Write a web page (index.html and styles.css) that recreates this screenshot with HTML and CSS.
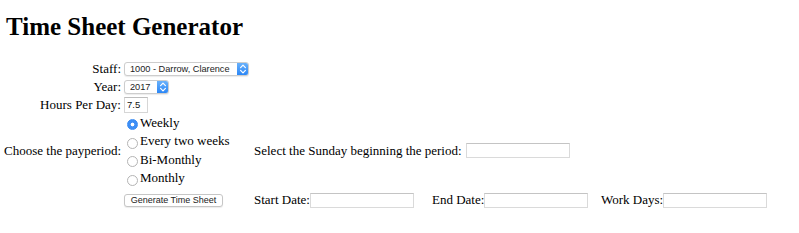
FILE: index.html
```html
<!DOCTYPE html>
<html lang="en">
<head>
    <meta charset="UTF-8">
    <title>Time Sheet Generator</title>
    <link rel="stylesheet" href="styles.css">
</head>
<body>
    <h1 class="title">Time Sheet Generator</h1>

    <form class="sheet-form">
        <!-- staff / year / hours -->
        <label class="field-label row-1" for="staff">Staff:</label>
        <div class="field row-1">
            <span class="select-box staff-box">
                <select id="staff"><option>1000 - Darrow, Clarence</option></select>
                <span class="select-arrow">
                    <svg width="12" height="14" viewBox="0 0 12 14"><path d="M3.6 5.6 6 3.2 8.4 5.6M3.6 8.4 6 10.8 8.4 8.4" fill="none" stroke="#fff" stroke-width="1.2" stroke-linecap="round" stroke-linejoin="round"/></svg>
                </span>
            </span>
        </div>

        <label class="field-label row-2" for="year">Year:</label>
        <div class="field row-2">
            <span class="select-box year-box">
                <select id="year"><option>2017</option></select>
                <span class="select-arrow">
                    <svg width="12" height="14" viewBox="0 0 12 14"><path d="M3.6 5.6 6 3.2 8.4 5.6M3.6 8.4 6 10.8 8.4 8.4" fill="none" stroke="#fff" stroke-width="1.2" stroke-linecap="round" stroke-linejoin="round"/></svg>
                </span>
            </span>
        </div>

        <label class="field-label row-3" for="hours">Hours Per Day:</label>
        <div class="field row-3">
            <input type="text" id="hours" class="hours-input" value="7.5">
        </div>

        <!-- pay period -->
        <div class="field-label row-4">Choose the payperiod:</div>
        <div class="radio-list row-4">
            <label class="radio-row"><input type="radio" name="period" checked>Weekly</label>
            <label class="radio-row"><input type="radio" name="period">Every two weeks</label>
            <label class="radio-row"><input type="radio" name="period">Bi-Monthly</label>
            <label class="radio-row"><input type="radio" name="period">Monthly</label>
        </div>
        <div class="sunday-cell row-4">
            <span>Select the Sunday beginning the period:</span><input type="text" class="date-input">
        </div>

        <!-- generate -->
        <div class="field row-5">
            <button type="button" class="gen-btn">Generate Time Sheet</button>
        </div>
        <div class="date-cell row-5 col-3">Start Date:<input type="text" class="date-input"></div>
        <div class="date-cell row-5 col-4">End Date:<input type="text" class="date-input"></div>
        <div class="date-cell row-5 col-5">Work Days:<input type="text" class="date-input"></div>
    </form>
</body>
</html>
```

FILE: styles.css
```css
body {
    margin: 0;
    padding: 12px 6px 0;
    font-family: "Liberation Serif", "Times New Roman", serif;
    font-size: 13px;
    color: #000;
    background-color: #fff;
}
.title {
    margin: 0;
    font-size: 25px;
    line-height: 29px;
    font-weight: bold;
}
.sheet-form {
    display: grid;
    grid-template-columns: 118px 130px 178px 169px 1fr;
    grid-template-rows: 18px 18px 18px 74px 25px;
    margin-top: 18.5px;
}
.row-1 { grid-row: 1; }
.row-2 { grid-row: 2; }
.row-3 { grid-row: 3; }
.row-4 { grid-row: 4; }
.row-5 { grid-row: 5; }
.col-3 { grid-column: 3; }
.col-4 { grid-column: 4; }
.col-5 { grid-column: 5; }

.field-label {
    grid-column: 1;
    display: flex;
    align-items: center;
    justify-content: flex-end;
    padding-right: 3px;
    white-space: nowrap;
}
.field {
    grid-column: 2;
    display: flex;
    align-items: center;
}

/* mac style select */
.select-box {
    display: inline-flex;
    height: 14px;
    box-sizing: border-box;
    border: 1px solid #cdcdcd;
    border-radius: 3px;
    background-color: #fff;
    box-shadow: 0 1px 1px rgba(0, 0, 0, 0.08);
    overflow: hidden;
}
.staff-box { width: 125px; }
.year-box { width: 45px; }
.select-box select {
    appearance: none;
    -webkit-appearance: none;
    flex: 1;
    min-width: 0;
    border: none;
    outline: none;
    background: transparent;
    padding: 0 0 0 5px;
    margin: 0;
    font-family: "Liberation Sans", Arial, sans-serif;
    font-size: 9.2px;
    color: #222;
}
.select-arrow {
    display: flex;
    width: 12px;
    margin: -1px -1px -1px 0;
    background: linear-gradient(#6fb5fb, #2683f6);
    border-radius: 0 3px 3px 0;
}

.hours-input {
    width: 24px;
    height: 16px;
    box-sizing: border-box;
    margin: 0;
    padding: 0 2px;
    border: 1px solid #d6d6d6;
    border-top-color: #bdbdbd;
    font-family: "Liberation Sans", Arial, sans-serif;
    font-size: 9.5px;
    color: #111;
}

.radio-list {
    grid-column: 2;
    display: flex;
    flex-direction: column;
}
.radio-row {
    display: flex;
    align-items: center;
    height: 18.5px;
    white-space: nowrap;
}
.radio-row input {
    appearance: none;
    -webkit-appearance: none;
    width: 11px;
    height: 11px;
    margin: 4px 2px 0 3px;
    border: 1px solid #b4b4b4;
    border-radius: 50%;
    background-color: #fff;
    box-sizing: border-box;
}
.radio-row input:checked {
    border-color: #3a8cf3;
    background: radial-gradient(circle, #fff 0 1.6px, #3d8ef6 2.2px);
}

.sunday-cell {
    grid-column: 3 / span 3;
    display: flex;
    align-items: center;
    white-space: nowrap;
}
.date-input {
    width: 104px;
    height: 15px;
    box-sizing: border-box;
    margin: 0;
    border: 1px solid #dadada;
    border-top-color: #c4c4c4;
    padding: 0 2px;
    font-size: 10px;
}
.sunday-cell .date-input {
    margin-left: 4px;
}
.date-cell {
    display: flex;
    align-items: center;
    white-space: nowrap;
}

.gen-btn {
    width: 99px;
    height: 13px;
    margin: 0;
    padding: 0;
    border: 1px solid #c6c6c6;
    border-radius: 3px;
    background-color: #fff;
    box-shadow: 0 1px 1px rgba(0, 0, 0, 0.08);
    font-family: "Liberation Sans", Arial, sans-serif;
    font-size: 9px;
    line-height: 11px;
    color: #222;
}
```
